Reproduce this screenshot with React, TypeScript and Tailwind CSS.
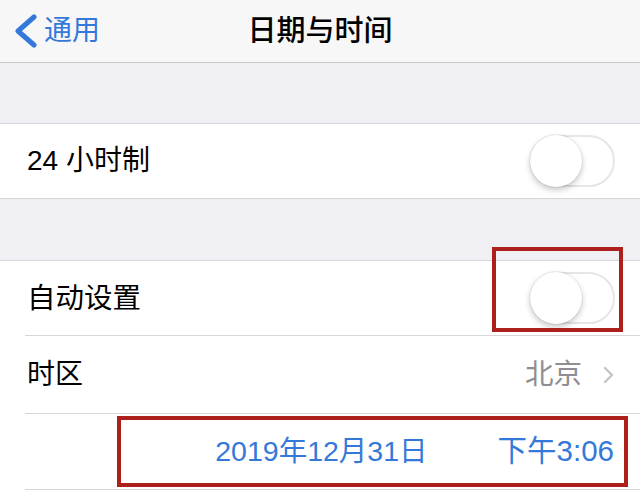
const font = { fontFamily: '"Liberation Sans", "Noto Sans CJK SC", sans-serif' };

function Toggle() {
  return (
    <div className="w-[85px] h-[52px] rounded-full border-2 border-[#e6e6ea] bg-white relative">
      <div className="absolute -left-[2px] -top-[2px] w-[52px] h-[52px] rounded-full bg-white shadow-[0_3px_6px_rgba(0,0,0,0.22),0_0_0_1px_rgba(0,0,0,0.06)]" />
    </div>
  );
}

export default function App() {
  return (
    <div className="w-[640px] h-[494px] overflow-hidden bg-[#efeff4] relative" style={font}>
      {/* Nav bar */}
      <div className="h-[63px] bg-[#f7f7f8] border-b border-[#c8c7cc] flex items-center relative">
        <div className="flex items-center pl-[14px] gap-[7px] text-[#3479d9]">
          <svg width="23" height="34" viewBox="0 0 23 34" fill="none">
            <path d="M20 3 L4 17 L20 31" stroke="#3479d9" strokeWidth="5" strokeLinecap="round" strokeLinejoin="round" />
          </svg>
          <span className="text-[28px] leading-none">通用</span>
        </div>
        <div className="absolute inset-0 flex items-center justify-center">
          <span className="text-[29px] font-medium text-black leading-none">日期与时间</span>
        </div>
      </div>

      <div className="h-[60px]" />

      {/* 24-hour */}
      <div className="bg-white border-y border-[#d6d6da]">
        <div className="h-[74px] flex items-center justify-between pl-[27px] pr-[25px]">
          <span className="text-[28px] text-black">24 小时制</span>
          <Toggle />
        </div>
      </div>

      <div className="h-[61px]" />

      {/* Auto / timezone / date */}
      <div className="bg-white border-t border-[#d6d6da]">
        <div className="h-[74px] flex items-center justify-between pl-[27px] pr-[25px]">
          <span className="text-[28.5px] text-black">自动设置</span>
          <Toggle />
        </div>
        <div className="ml-[25px] border-t border-[#d6d6da]" />
        <div className="h-[77px] flex items-center justify-between pl-[27px] pr-[26px]">
          <span className="text-[28px] text-black">时区</span>
          <div className="flex items-center gap-[21px]">
            <span className="text-[28.5px] text-[#8e8e93]">北京</span>
            <svg width="11" height="18" viewBox="0 0 11 18" fill="none">
              <path d="M2 2 L9 9 L2 16" stroke="#c4c4c9" strokeWidth="2.4" strokeLinecap="round" strokeLinejoin="round" />
            </svg>
          </div>
        </div>
        <div className="ml-[25px] border-t border-[#d6d6da]" />
        <div className="h-[75px] flex items-center justify-end gap-[70px] pr-[26px]">
          <span className="text-[28.5px] text-[#3479d9]">2019年12月31日</span>
          <span className="text-[29.5px] text-[#3479d9]">下午3:06</span>
        </div>
        <div className="ml-[25px] border-t border-[#d6d6da]" />
        <div className="h-[10px]" />
      </div>

      {/* Annotation boxes */}
      <div className="absolute left-[492px] top-[247px] w-[131px] h-[85px] border-4 border-[#ad1f1a]" />
      <div className="absolute left-[117px] top-[416px] w-[511px] h-[71px] border-4 border-[#ad1f1a]" />
    </div>
  );
}
